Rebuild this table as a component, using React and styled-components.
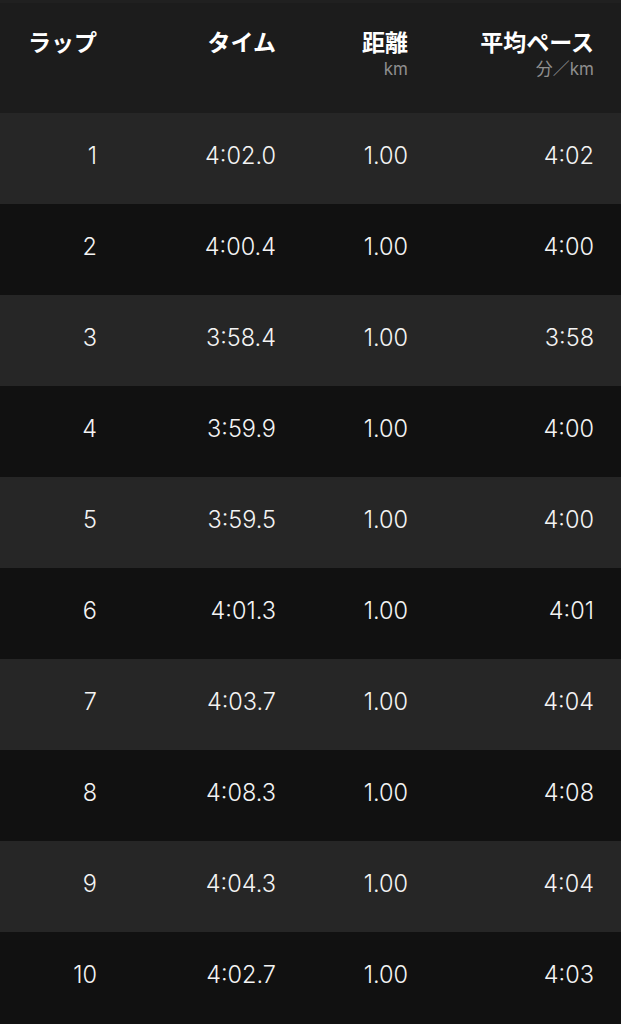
import React from 'react';
import styled, { createGlobalStyle } from 'styled-components';

const laps = [
  { lap: 1, time: '4:02.0', dist: '1.00', pace: '4:02' },
  { lap: 2, time: '4:00.4', dist: '1.00', pace: '4:00' },
  { lap: 3, time: '3:58.4', dist: '1.00', pace: '3:58' },
  { lap: 4, time: '3:59.9', dist: '1.00', pace: '4:00' },
  { lap: 5, time: '3:59.5', dist: '1.00', pace: '4:00' },
  { lap: 6, time: '4:01.3', dist: '1.00', pace: '4:01' },
  { lap: 7, time: '4:03.7', dist: '1.00', pace: '4:04' },
  { lap: 8, time: '4:08.3', dist: '1.00', pace: '4:08' },
  { lap: 9, time: '4:04.3', dist: '1.00', pace: '4:04' },
  { lap: 10, time: '4:02.7', dist: '1.00', pace: '4:03' },
];

function App() {
  return (
    <>
      <GlobalStyle />
      <Table>
        <Header>
          <HeadCell>
            <HeadTitle>ラップ</HeadTitle>
          </HeadCell>
          <HeadCell>
            <HeadTitle>タイム</HeadTitle>
          </HeadCell>
          <HeadCell>
            <HeadTitle>距離</HeadTitle>
            <Unit>km</Unit>
          </HeadCell>
          <HeadCell>
            <HeadTitle>平均ペース</HeadTitle>
            <Unit>分／km</Unit>
          </HeadCell>
        </Header>
        {laps.map((li, i) => (
          <Row key={li.lap} odd={i % 2 === 0}>
            <Cell>{li.lap}</Cell>
            <Cell>{li.time}</Cell>
            <Cell>{li.dist}</Cell>
            <Cell>{li.pace}</Cell>
          </Row>
        ))}
      </Table>
    </>
  );
}

export default App;

const GlobalStyle = createGlobalStyle`
  html, body {
    margin: 0;
    padding: 0;
    background: #111111;
  }
  body {
    font-family: Inter, "Noto Sans CJK JP", sans-serif;
    color: #ffffff;
  }
`;

const Table = styled.section`
  width: 621px;
`;

const columns = `
  display: grid;
  grid-template-columns: 97px 179px 132px 186px;
  padding-right: 27px;
`;

const Header = styled.header`
  ${columns}
  height: 110px;
  border-top: 3px solid #202020;
  background-color: #1c1c1c;
  align-items: start;
`;

const HeadCell = styled.div`
  display: flex;
  flex-direction: column;
  align-items: flex-end;
  padding-top: 22px;
`;

const HeadTitle = styled.h2`
  margin: 0;
  font-family: "Noto Sans CJK JP", sans-serif;
  font-weight: 700;
  font-size: 23px;
  line-height: 32px;
  color: #ffffff;
`;

const Unit = styled.span`
  margin-top: 2px;
  font-family: Inter, "Noto Sans CJK JP", sans-serif;
  font-size: 17px;
  line-height: 20px;
  color: #8e8e8e;
`;

const Row = styled.div`
  ${columns}
  height: 91px;
  align-items: center;
  background-color: ${({ odd }) => (odd ? '#262626' : '#111111')};
`;

const Cell = styled.div`
  text-align: right;
  font-size: 23.5px;
  font-weight: 300;
  color: #f4f4f4;
  padding-bottom: 6px;
`;
